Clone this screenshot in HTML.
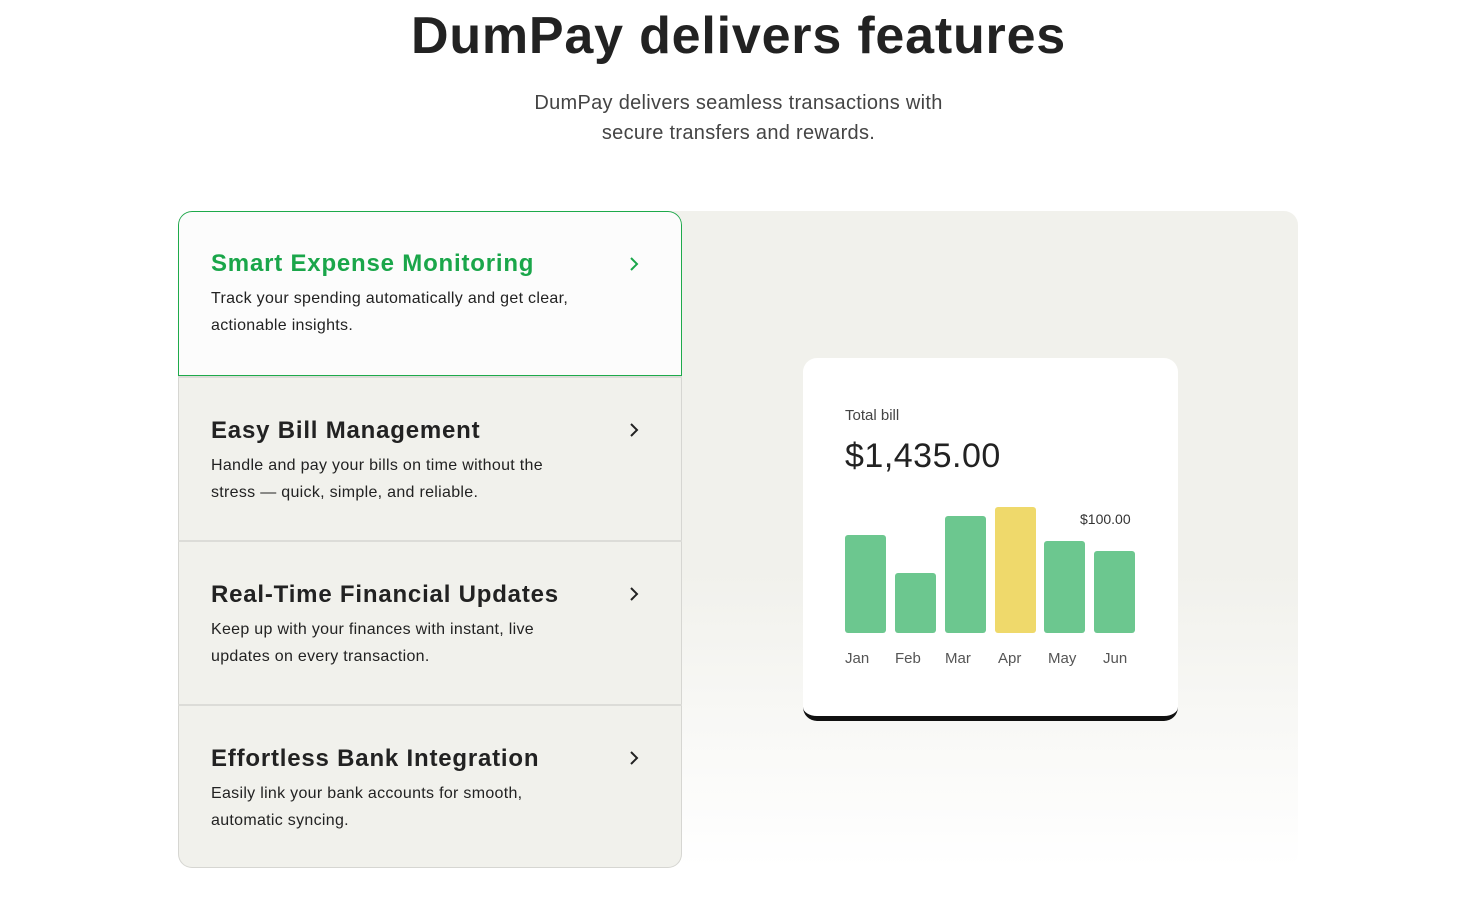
<!DOCTYPE html>
<html><head><style>
body{margin:0;background:#fff;font-family:"Liberation Sans",sans-serif;width:1484px;height:901px;overflow:hidden;position:relative;color:#222}
h1{position:absolute;top:6px;left:0;width:1477px;text-align:center;margin:0;font-size:52px;font-weight:bold;color:#222;letter-spacing:0.8px}
.sub{position:absolute;top:88px;left:0;width:1477px;text-align:center;font-size:20px;line-height:30px;color:#444;letter-spacing:0.3px}
.panel{position:absolute;left:640px;top:211px;width:658px;height:657px;border-radius:14px;background:linear-gradient(#f1f1ec 0%,#f1f1ec 55%,#fff 100%)}
.list{position:absolute;left:178px;top:211px;width:504px;height:657px;border-radius:14px;background:#f1f1ec;overflow:hidden;box-shadow:inset 0 0 0 1px #d6d6d2}
.item{position:absolute;left:0;width:504px;height:164px;border-top:2px solid #dcdcd8;box-sizing:border-box}
.item h3{position:absolute;left:33px;top:39px;margin:0;font-size:24px;font-weight:bold;color:#222;letter-spacing:0.8px}
.item p{position:absolute;left:33px;top:75px;margin:0;font-size:16px;line-height:26.5px;color:#222;letter-spacing:0.3px}
.item svg{position:absolute;left:450px;top:43px}
.act{background:#fcfcfc;border:1px solid #1eaa4b;border-radius:14px 14px 0 0;top:0;height:165px;z-index:2}
.act h3{color:#1aa64a}
.card{position:absolute;left:803px;top:358px;width:375px;height:358px;background:#fff;border-radius:14px;border-bottom:5px solid #111}
.bar{position:absolute;width:41px;border-radius:3px;background:#6cc78f}
.m{position:absolute;top:292px;font-size:15px;color:#555}
</style></head><body>
<h1>DumPay delivers features</h1>
<div class="sub">DumPay delivers seamless transactions with<br>secure transfers and rewards.</div>
<div class="panel"></div>
<div class="list">
<div class="item act"><h3 style="top:38px;left:32px">Smart Expense Monitoring</h3><p style="top:74px;left:32px">Track your spending automatically and get clear,<br>actionable insights.</p><svg width="12" height="18" style="top:43px;left:449px"><path d="M3 3l6 6-6 6" stroke="#1aa64a" stroke-width="2" fill="none"/></svg></div>
<div class="item" style="top:165px"><h3>Easy Bill Management</h3><p>Handle and pay your bills on time without the<br>stress — quick, simple, and reliable.</p><svg width="12" height="18"><path d="M3 3l6 6-6 6" stroke="#222" stroke-width="2" fill="none"/></svg></div>
<div class="item" style="top:329px"><h3>Real-Time Financial Updates</h3><p>Keep up with your finances with instant, live<br>updates on every transaction.</p><svg width="12" height="18"><path d="M3 3l6 6-6 6" stroke="#222" stroke-width="2" fill="none"/></svg></div>
<div class="item" style="top:493px"><h3>Effortless Bank Integration</h3><p>Easily link your bank accounts for smooth,<br>automatic syncing.</p><svg width="12" height="18"><path d="M3 3l6 6-6 6" stroke="#222" stroke-width="2" fill="none"/></svg></div>
</div>
<div class="card">
<div style="position:absolute;left:42px;top:49px;font-size:15px;color:#444">Total bill</div>
<div style="position:absolute;left:42px;top:79px;font-size:34px;color:#222;letter-spacing:0.5px">$1,435.00</div>
<div style="position:absolute;left:277px;top:153px;font-size:14px;color:#333">$100.00</div>
<div class="bar" style="left:42px;top:177px;height:98px"></div>
<div class="bar" style="left:92px;top:215px;height:60px"></div>
<div class="bar" style="left:142px;top:158px;height:117px"></div>
<div class="bar" style="left:192px;top:149px;height:126px;background:#efd96b"></div>
<div class="bar" style="left:241px;top:183px;height:92px"></div>
<div class="bar" style="left:291px;top:193px;height:82px"></div>
<div class="m" style="left:42px">Jan</div><div class="m" style="left:92px">Feb</div><div class="m" style="left:142px">Mar</div><div class="m" style="left:195px">Apr</div><div class="m" style="left:245px">May</div><div class="m" style="left:300px">Jun</div>
</div>
</body></html>
